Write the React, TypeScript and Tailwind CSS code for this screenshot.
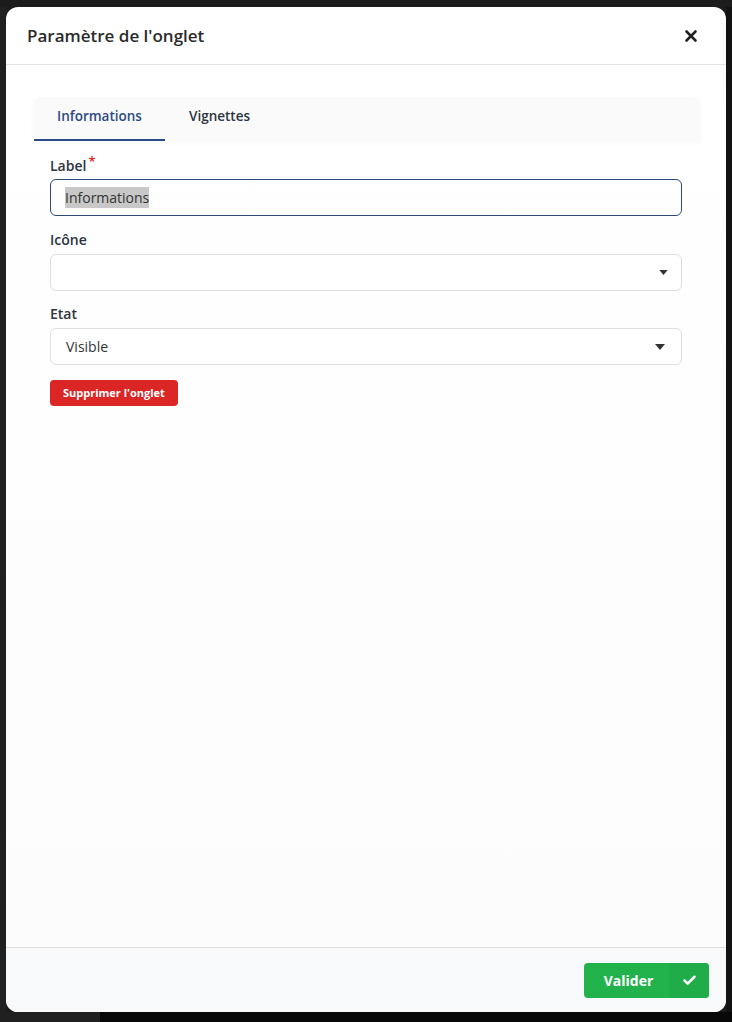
import { X, Check } from 'lucide-react';

function Caret() {
  return (
    <svg width="10" height="6" viewBox="0 0 10 6" className="text-[#333]">
      <path d="M0 0 L10 0 L5 6 Z" fill="currentColor" />
    </svg>
  );
}

export default function App() {
  return (
    <div className="flex h-[1022px] w-[732px] flex-col bg-[#1c1c1c] font-['Open_Sans',sans-serif]">
      <div className="flex flex-1 pt-[7px]">
        <div className="w-[6px] bg-[#202020]" />
        <div className="flex w-[720px] flex-col overflow-hidden rounded-[12px] bg-white">
          {/* header */}
          <div className="flex h-[58px] items-center justify-between border-b border-[#e3e3e3] pl-[21px] pr-[26px]">
            <h1 className="text-[17px] font-semibold text-[#2b2b2b]">Paramètre de l'onglet</h1>
            <X size={18} strokeWidth={3.5} className="text-[#222]" />
          </div>

          {/* body */}
          <div className="flex-1 bg-gradient-to-b from-white to-[#fcfcfc] pl-[28px] pr-[26px] pt-[32px]">
            <div className="flex h-[44px] items-stretch rounded-t-[8px] bg-[#fafafa] shadow-[0_1px_6px_rgba(0,0,0,0.03)]">
              <div className="flex w-[131px] items-center justify-center border-b-2 border-[#2c4a86] pb-[4px] text-[13.5px] font-semibold text-[#2c4a86]">
                Informations
              </div>
              <div className="flex items-center px-[24px] pb-[6px] text-[13.5px] font-semibold text-[#2b3442]">Vignettes</div>
            </div>

            <div className="w-[648px] pl-[16px] pt-[14px]">
              <label className="flex h-[20px] items-center text-[14px] font-semibold text-[#2d3340]">
                Label<span className="mb-[8px] ml-[2px] text-[13px] leading-none text-[#e02424]">*</span>
              </label>
              <div className="mt-[4px] flex h-[37px] items-center rounded-[6px] border border-[#2b4a7a] px-[14px] text-[14px] text-[#333]">
                <span className="bg-[#c8c8c8]">Informations</span>
              </div>

              <label className="mt-[14px] block h-[20px] text-[14px] leading-[20px] font-semibold text-[#2d3340]">Icône</label>
              <div className="mt-[4px] flex h-[37px] items-center justify-end rounded-[6px] border border-[#dedede] bg-white pr-[13px]">
                <svg width="9" height="5" viewBox="0 0 10 6" className="text-[#333]">
                  <path d="M0 0 L10 0 L5 6 Z" fill="currentColor" />
                </svg>
              </div>

              <label className="mt-[13px] block h-[20px] text-[14px] leading-[20px] font-semibold text-[#2d3340]">Etat</label>
              <div className="mt-[4px] flex h-[37px] items-center justify-between rounded-[6px] border border-[#dedede] bg-white pl-[15px] pr-[16px] text-[14px] text-[#333]">
                <span>Visible</span>
                <Caret />
              </div>

              <button className="mt-[15px] h-[26px] rounded-[4px] bg-[#dc2626] px-[13px] text-[11px] font-bold text-white">
                Supprimer l'onglet
              </button>
            </div>
          </div>

          {/* footer */}
          <div className="flex h-[65px] items-center justify-end border-t border-[#dcdcdc] bg-[#f8f9fa] pr-[17px]">
            <button className="flex h-[35px] w-[125px] items-stretch overflow-hidden rounded-[4px] bg-[#22b24c] text-white">
              <span className="flex flex-1 items-center justify-center pl-[4px] text-[14px] font-bold">Valider</span>
              <span className="flex w-[40px] items-center justify-center bg-[#20ad49]">
                <Check size={15} strokeWidth={4} />
              </span>
            </button>
          </div>
        </div>
        <div className="flex-1 bg-[#121212]" />
      </div>
      <div className="flex h-[10px]">
        <div className="w-[100px] bg-[#202020]" />
        <div className="flex-1 bg-[#080808]" />
      </div>
    </div>
  );
}
